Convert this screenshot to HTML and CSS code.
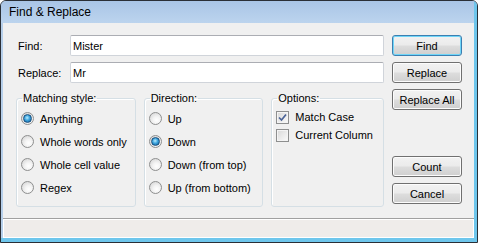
FILE: index.html
```html
<!DOCTYPE html>
<html lang="en">
  <head>
    <meta charset="UTF-8">
    <meta name="viewport" content="width=device-width, initial-scale=1.0">
    <link rel="stylesheet" href="styles.css">
    <title>Find &amp; Replace</title>
  </head>
  <body>
    <div class="window">
      <div class="titlebar">Find &amp; Replace</div>
      <div class="client">
        <div class="main">
          <div class="form">
            <div class="field">
              <label>Find:</label>
              <input class="textbox" value="Mister" />
            </div>
            <div class="field">
              <label>Replace:</label>
              <input class="textbox" value="Mr" />
            </div>
            <div class="groups">
              <fieldset class="group">
                <legend>Matching style:</legend>
                <label class="option"><span class="radio checked"></span>Anything</label>
                <label class="option"><span class="radio"></span>Whole words only</label>
                <label class="option"><span class="radio"></span>Whole cell value</label>
                <label class="option"><span class="radio"></span>Regex</label>
              </fieldset>
              <fieldset class="group">
                <legend>Direction:</legend>
                <label class="option"><span class="radio"></span>Up</label>
                <label class="option"><span class="radio checked"></span>Down</label>
                <label class="option"><span class="radio"></span>Down (from top)</label>
                <label class="option"><span class="radio"></span>Up (from bottom)</label>
              </fieldset>
              <fieldset class="group options">
                <legend>Options:</legend>
                <label class="option check-row">
                  <span class="checkbox">
                    <svg width="9" height="9" viewBox="0 0 9 9"><path d="M1 4.5 L3.5 7 L8 1.5" fill="none" stroke="#4b6397" stroke-width="1.7"/></svg>
                  </span>
                  <span class="focus">Match Case</span>
                </label>
                <label class="option check-row">
                  <span class="checkbox"></span>
                  <span>Current Column</span>
                </label>
              </fieldset>
            </div>
          </div>
          <div class="actions">
            <button class="btn default">Find</button>
            <button class="btn">Replace</button>
            <button class="btn">Replace All</button>
            <button class="btn count">Count</button>
            <button class="btn">Cancel</button>
          </div>
        </div>
        <div class="status"></div>
      </div>
    </div>
  </body>
</html>
```

FILE: styles.css
```css
* {
margin: 0;
padding: 0;
box-sizing: border-box;
}
body {
width: 478px;
height: 243px;
font-family: "Liberation Sans", Arial, sans-serif;
font-size: 11px;
color: #000;
background: #fff;
}
.window {
width: 478px;
height: 243px;
display: flex;
flex-direction: column;
border: 1px solid #2a2f36;
border-radius: 6px 6px 0 0;
background: #b6cfea;
padding: 0 3px 4px 2px;
box-shadow: inset -3px -4px 0 #6ec6ec;
overflow: hidden;
}
.titlebar {
height: 22px;
line-height: 22px;
font-size: 12px;
background: linear-gradient(#a9c5e6, #bcd4ee);
margin: 0 -3px 0 -2px;
padding-left: 8px;
box-shadow: inset -3px 0 0 #6ec6ec;
}
.client {
flex: 1;
display: flex;
flex-direction: column;
background: #f0f0f0;
}
.main {
flex: 1;
display: flex;
gap: 8px;
padding: 12px 12px 0 13px;
}
.form {
width: 368px;
display: flex;
flex-direction: column;
gap: 6px;
}
.field {
display: flex;
align-items: center;
height: 21px;
}
.field label {
width: 54px;
padding-left: 2px;
}
.textbox {
width: 314px;
height: 21px;
border: 1px solid #d0d4da;
border-top-color: #abadb3;
border-radius: 2px;
background: #fff;
padding: 0 2px;
font-family: inherit;
font-size: 11px;
outline: none;
}
.groups {
display: flex;
gap: 8px;
margin-top: 2px;
}
.group {
width: 120px;
height: 116px;
border: 1px solid #d5dfe5;
border-radius: 3px;
padding: 2px 0 0 4px;
box-shadow: inset 1px 1px 0 #fff;
}
.group.options {
width: 113px;
}
.group legend {
margin-left: 1px;
padding: 0 1px;
line-height: 14px;
}
.option {
display: flex;
align-items: center;
height: 23px;
white-space: nowrap;
}
.radio {
width: 13px;
height: 13px;
border-radius: 50%;
border: 1px solid #8e8f8f;
background: radial-gradient(circle at 60% 65%, #ffffff 0%, #f4f4f4 35%, #cfcfcf 100%);
margin-right: 6px;
flex-shrink: 0;
display: flex;
align-items: center;
justify-content: center;
}
.radio.checked::after {
content: "";
width: 7px;
height: 7px;
border-radius: 50%;
border: 1px solid #1a4f7d;
background: radial-gradient(circle at 45% 40%, #b8ecff 0%, #3aa2dc 45%, #0f5a94 100%);
}
.check-row {
height: 18px;
}
.check-row:first-of-type {
margin-top: 1px;
}
.checkbox {
width: 13px;
height: 13px;
border: 1px solid #8e8f8f;
background: linear-gradient(135deg, #d8d8d8, #fbfbfb);
box-shadow: inset 0 0 0 1px #f4f4f4;
margin-right: 4px;
flex-shrink: 0;
display: flex;
align-items: center;
justify-content: center;
}
.check-row span:last-child {
padding: 0 1px;
border: 1px dotted transparent;
line-height: 11px;
}
.check-row .focus {
border-color: #000;
}
.actions {
width: 70px;
display: flex;
flex-direction: column;
gap: 6px;
}
.btn {
height: 21px;
border: 1px solid #707070;
border-radius: 3px;
background: linear-gradient(#f2f2f2 0%, #ebebeb 48%, #dddddd 52%, #cfcfcf 100%);
box-shadow: inset 0 0 0 1px #fcfcfc;
font-family: inherit;
font-size: 11px;
color: #000;
}
.btn.default {
border-color: #3c7fb1;
box-shadow: inset 0 0 0 1px #6fd6f8;
}
.btn.count {
margin-top: 40px;
}
.status {
height: 20px;
border-top: 1px solid #a0a0a0;
background: #efecea;
box-shadow: inset 1px 1px 0 #fff, inset -1px -1px 0 #fff;
}
```
